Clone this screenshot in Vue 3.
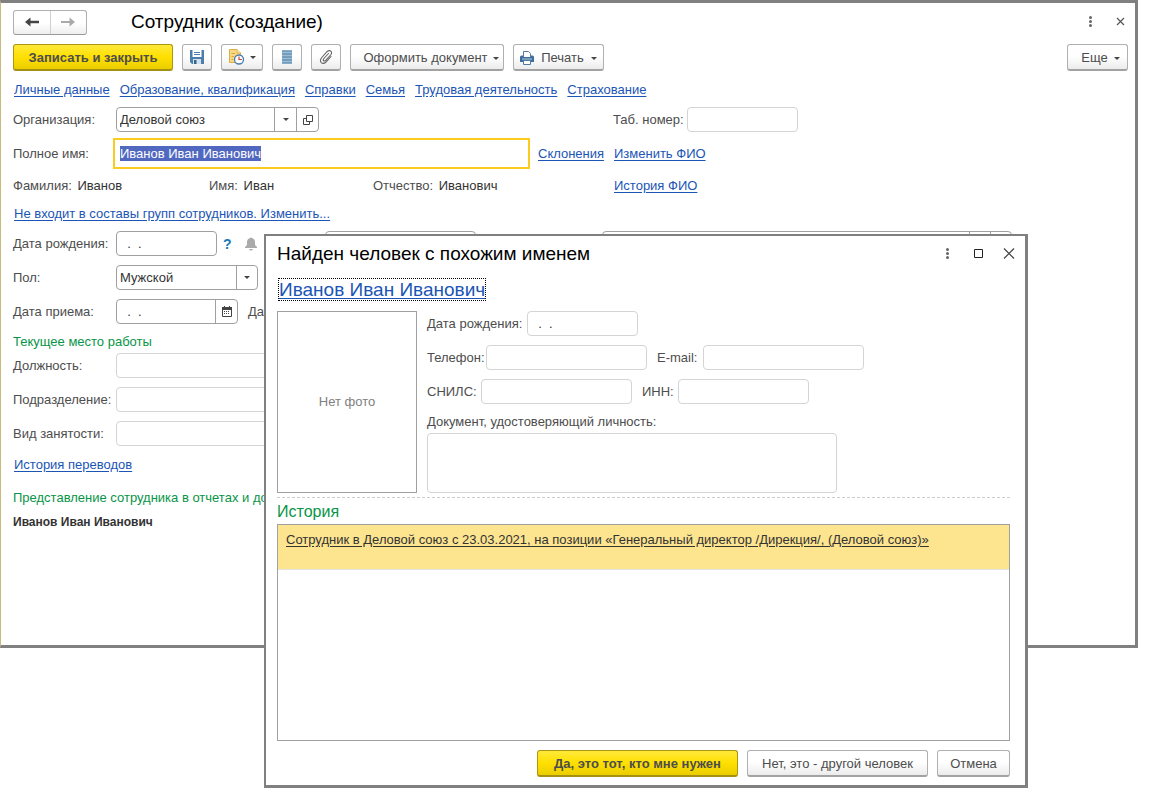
<script setup>
import { ref, onMounted } from 'vue'

const sections = ['Личные данные', 'Образование, квалификация', 'Справки', 'Семья', 'Трудовая деятельность', 'Страхование']
const organization = ref('Деловой союз')
const fullName = ref('Иванов Иван Иванович')
const gender = ref('Мужской')
const birthDate = ref('  .  .')
const hireDate = ref('  .  .')
const foundBirthDate = ref('  .  .')
const fullNameInput = ref(null)

onMounted(() => {
  fullNameInput.value.focus()
  fullNameInput.value.select()
})
</script>

<template>
  <div class="desktop">
    <main class="window">
      <header class="titlebar">
        <div class="history-nav">
          <button type="button" aria-label="Назад">
            <svg width="16" height="12" viewBox="0 0 16 12"><path d="M1 6 6.500 1.500V4.800H15V7.200H6.500V10.500Z" fill="#444" /></svg>
          </button>
          <button type="button" aria-label="Вперед">
            <svg width="16" height="12" viewBox="0 0 16 12"><path d="M15 6 9.500 1.500V5H1V7H9.500V10.500Z" fill="#aaa" /></svg>
          </button>
        </div>
        <h1>Сотрудник (создание)</h1>
        <div class="window-tools">
          <button type="button" class="plain" aria-label="Меню">
            <svg width="12" height="12" viewBox="0 0 12 12"><g fill="#666"><circle cx="5.500" cy="1.500" r="1.500" /><circle cx="5.500" cy="5.500" r="1.500" /><circle cx="5.500" cy="9.500" r="1.500" /></g></svg>
          </button>
          <button type="button" class="plain" aria-label="Закрыть">
            <svg width="12" height="12" viewBox="0 0 12 12"><path d="M2 2 9 9M9 2 2 9" stroke="#555" stroke-width="1.200" /></svg>
          </button>
        </div>
      </header>

      <div class="toolbar">
        <button type="button" class="btn primary save">Записать и закрыть</button>
        <button type="button" class="btn icon-btn" aria-label="Записать">
          <svg width="16" height="16" viewBox="0 0 16 16">
            <path d="M1 1H15V15H3L1 13Z" fill="#4d7eab" />
            <path d="M3.500 1H12.500V8H3.500Z" fill="#fff" />
            <path d="M5 3.500H11M5 5.500H11" stroke="#4d7eab" />
            <path d="M4 10H12V15H4Z" fill="#d5e1ec" /><path d="M5 11H7.500V15H5Z" fill="#33658f" />
          </svg>
        </button>
        <button type="button" class="btn icon-btn wide" aria-label="Отложенное проведение">
          <svg width="17" height="16" viewBox="0 0 17 16">
            <path d="M1.500 .5H9L12.500 4V13.500H1.500Z" fill="#f8d983" stroke="#dcae48" />
            <path d="M9 .5V4H12.500" fill="#fff3c9" stroke="#dcae48" />
            <path d="M3.500 4.500H7M3.500 7.500H6M3.500 10.500H5" stroke="#d8a63d" />
            <circle cx="11" cy="10.500" r="4.500" fill="#fff" stroke="#487bb1" stroke-width="1.300" />
            <path d="M11 7.500V10.500H14" fill="none" stroke="#d34a3a" stroke-width="1.200" />
          </svg>
          <span class="caret"></span>
        </button>
        <button type="button" class="btn icon-btn" aria-label="Список">
          <svg width="12" height="16" viewBox="0 0 12 16"><path d="M1 1.500H11V14.500H1Z" fill="#9dbdd5" /><path d="M1 2H11M1 5H11M1 8H11M1 11H11M1 14H11" stroke="#4b7da6" stroke-width="1.200" /></svg>
        </button>
        <button type="button" class="btn icon-btn" aria-label="Файлы">
          <svg width="16" height="16" viewBox="0 0 16 16"><path d="M10.500 4.500 5.500 10Q4.800 11.500 6 12Q7 12.300 8 11.200L13 5.500Q14.300 3.200 12.600 2Q11 1 9.200 2.500L3.400 9Q1.500 11.700 3.300 13.600Q5.300 15.400 8 13L13 7.500" fill="none" stroke="#666" stroke-width="1.100" stroke-linecap="round" /></svg>
        </button>
        <button type="button" class="btn doc">Оформить документ<span class="caret"></span></button>
        <button type="button" class="btn print">
          <svg width="14" height="14" viewBox="0 0 14 14">
            <path d="M3.500 6V.5H8.500L10.500 2.500V6" fill="#fff" stroke="#527b9f" />
            <path d="M0 6Q0 4.500 1.500 4.500H3V6H11V4.500H12.500Q14 4.500 14 6V11H0Z" fill="#3d6f9e" />
            <path d="M2 8H12" stroke="#b6cbdc" /><path d="M3.500 9.500H10.500V13.500H3.500Z" fill="#fff" stroke="#527b9f" />
          </svg>
          Печать<span class="caret"></span>
        </button>
        <button type="button" class="btn more">Еще<span class="caret"></span></button>
      </div>

      <nav class="sections">
        <a v-for="s in sections" :key="s" href="#">{{ s }}</a>
      </nav>

      <div class="row columns org-row">
        <label for="org">Организация:</label>
        <div class="field org">
          <input id="org" v-model="organization" type="text" />
          <button type="button" aria-label="Выбрать"><span class="caret"></span></button>
          <button type="button" aria-label="Открыть">
            <svg width="10" height="10" viewBox="0 0 10 10"><path d="M3.500 .5H9.500V6.500H3.500ZM3.500 3.500H.5V9.500H6.500V6.500" fill="none" stroke="#444" /></svg>
          </button>
        </div>
        <div class="number">
          <label for="number">Таб. номер:</label>
          <input id="number" type="text" class="box muted" />
        </div>
      </div>

      <div class="row columns name-row">
        <label for="full-name">Полное имя:</label>
        <input id="full-name" ref="fullNameInput" v-model="fullName" type="text" class="focused" />
        <a href="#">Склонения</a>
        <a href="#">Изменить ФИО</a>
      </div>

      <div class="row name-parts">
        <span>Фамилия: <b>Иванов</b></span>
        <span>Имя: <b>Иван</b></span>
        <span>Отчество: <b>Иванович</b></span>
        <a href="#">История ФИО</a>
      </div>

      <div class="groups"><a href="#">Не входит в составы групп сотрудников. Изменить...</a></div>

      <div class="stack">
        <div class="row">
          <label for="birth">Дата рождения:</label>
          <input id="birth" v-model="birthDate" type="text" class="box birth" />
          <button type="button" class="plain help" aria-label="Справка">?</button>
          <svg class="bell" width="12" height="14" viewBox="0 0 12 14"><path d="M5 1Q6 0 7 1Q10 2 10 5V8L12 10V11H0V10L2 8V5Q2 2 5 1ZM4 12H8Q7.500 13.500 6 13.500Q4.500 13.500 4 12Z" fill="#aaa" /></svg>
          <div class="field second-field"></div>
          <div class="field third-field"><i></i><i></i></div>
        </div>
        <div class="row">
          <label for="gender">Пол:</label>
          <div class="field gender">
            <select id="gender" v-model="gender"><option>Мужской</option></select>
            <span class="drop"><span class="caret"></span></span>
          </div>
        </div>
        <div class="row">
          <label for="hire">Дата приема:</label>
          <div class="field hire">
            <input id="hire" v-model="hireDate" type="text" />
            <button type="button" aria-label="Календарь">
              <svg width="10" height="11" viewBox="0 0 10 11"><path d="M.5 1.500H9.500V10.500H.5Z" fill="#fff" stroke="#444" /><path d="M0 1H10V4H0ZM2 0H3V1H2ZM7 0H8V1H7Z" fill="#444" /><path d="M2 5.500H8M2 7.500H8" stroke="#444" stroke-dasharray="1 1" /></svg>
            </button>
          </div>
          <span class="next-date">Дата</span>
        </div>
      </div>

      <h2 class="workplace">Текущее место работы</h2>
      <div class="stack">
        <div class="row"><label for="position">Должность:</label><input id="position" type="text" class="box muted job" /></div>
        <div class="row"><label for="department">Подразделение:</label><input id="department" type="text" class="box muted job" /></div>
        <div class="row"><label for="employment">Вид занятости:</label><input id="employment" type="text" class="box muted job" /></div>
      </div>
      <div class="transfers"><a href="#">История переводов</a></div>
      <h2 class="presentation">Представление сотрудника в отчетах и документах</h2>
      <p class="presentation-name">Иванов Иван Иванович</p>
    </main>

    <section class="dialog" role="dialog" aria-labelledby="dialog-title">
      <header class="dialog-title">
        <h2 id="dialog-title">Найден человек с похожим именем</h2>
        <div class="dialog-tools">
          <button type="button" class="plain" aria-label="Меню">
            <svg width="12" height="12" viewBox="0 0 12 12"><g fill="#666"><circle cx="6.500" cy="1.500" r="1.500" /><circle cx="6.500" cy="5.500" r="1.500" /><circle cx="6.500" cy="9.500" r="1.500" /></g></svg>
          </button>
          <button type="button" class="plain" aria-label="Развернуть">
            <svg width="12" height="12" viewBox="0 0 12 12"><path d="M2.500 1.500H10.500V9.500H2.500Z" fill="none" stroke="#222" /></svg>
          </button>
          <button type="button" class="plain" aria-label="Закрыть">
            <svg width="12" height="12" viewBox="0 0 12 12"><path d="M1 .5 11 10.500M11 .5 1 10.500" stroke="#444" stroke-width="1.200" /></svg>
          </button>
        </div>
      </header>
      <div class="person"><a href="#">Иванов Иван Иванович</a></div>

      <div class="card">
        <div class="photo">Нет фото</div>
        <div class="details">
          <div class="detail-row">
            <label for="f-birth" class="w100">Дата рождения:</label><input id="f-birth" v-model="foundBirthDate" type="text" class="box muted w111" />
          </div>
          <div class="detail-row">
            <label for="phone" class="w59">Телефон:</label><input id="phone" type="text" class="box muted w161" />
            <label for="email" class="second w46">E-mail:</label><input id="email" type="text" class="box muted w161" />
          </div>
          <div class="detail-row">
            <label for="snils" class="w54">СНИЛС:</label><input id="snils" type="text" class="box muted w151" />
            <label for="inn" class="second w36">ИНН:</label><input id="inn" type="text" class="box muted w131" />
          </div>
          <label for="document" class="document-label">Документ, удостоверяющий личность:</label>
          <textarea id="document" class="box muted"></textarea>
        </div>
      </div>

      <h3>История</h3>
      <div class="history-list">
        <div class="history-item">
          <a href="#">Сотрудник в Деловой союз с 23.03.2021, на позиции «Генеральный директор /Дирекция/, (Деловой союз)»</a>
        </div>
      </div>

      <footer>
        <button type="button" class="btn primary yes">Да, это тот, кто мне нужен</button>
        <button type="button" class="btn no">Нет, это - другой человек</button>
        <button type="button" class="btn cancel">Отмена</button>
      </footer>
    </section>
  </div>
</template>

<style>
body { background: #fff; }
</style>

<style scoped>
* { box-sizing: border-box; }
.desktop {
  position: relative;
  min-height: 100vh;
  font: 13px/16px "Liberation Sans", Arial, sans-serif;
  color: #4d4d4d;
}
button, input, select, textarea { font: inherit; margin: 0; color: inherit; }
h1, h2, h3, p { margin: 0; font-weight: normal; }
svg { display: block; flex: none; }
a { color: #1b55b5; text-underline-offset: 2px; }

.window {
  margin-right: 24px;
  min-height: 648px;
  padding: 7px 7px 0 12px;
  border: 3px solid #808080;
  border-left: 1px solid #c9ba7c;
}
.titlebar { display: flex; align-items: center; height: 24px; }
.history-nav { display: flex; width: 74px; height: 25px; border: 1px solid #b0b0b0; border-bottom-color: #999; border-radius: 3px; background: linear-gradient(#fff 50%, #efefef); }
.history-nav button { flex: 1; display: flex; align-items: center; justify-content: center; padding: 0; border: 0; background: none; }
.history-nav button + button { border-left: 1px solid #d0d0d0; }
h1 { margin-left: 44px; font-size: 19px; line-height: 24px; color: #000; }
.window-tools { display: flex; gap: 18px; margin-left: auto; padding-right: 1px; }
.plain { display: flex; align-items: center; padding: 0; border: 0; background: none; }

.toolbar { display: flex; margin-top: 10px; gap: 9px; }
.btn {
  display: flex;
  align-items: center;
  justify-content: center;
  height: 27px;
  padding: 2px 0 0;
  border: 1px solid #b0b0b0;
  border-bottom: 2px solid #a2a2a2;
  border-radius: 3px;
  background: linear-gradient(#fff 45%, #ececec);
  white-space: nowrap;
}
.primary { border-color: #ac9610; border-bottom-color: #a49012; background: linear-gradient(#ffe93a, #ffe000 50%, #ebcd00); font-weight: bold; }
.caret { flex: none; width: 0; border: 3px solid transparent; border-top-color: #444; border-bottom: 0; }
.save { width: 160px; }
.icon-btn { width: 30px; padding: 0; }
.icon-btn.wide { width: 42px; gap: 5px; }
.doc { width: 154px; gap: 5px; padding-left: 8px; }
.print { width: 91px; gap: 7px; }
.more { width: 61px; gap: 6px; padding-left: 6px; margin-left: auto; }

.sections { display: flex; align-items: center; gap: 10px; height: 36px; padding: 2px 0 0 1px; }
.row { display: flex; align-items: center; }
.row > label { width: 103px; flex: none; }
.columns { display: grid; grid-template-columns: 103px 422px 76px 1fr; }
.org-row { height: 25px; grid-template-columns: 103px 497px 1fr; }
.name-row { height: 31px; margin-top: 6px; }
.box, .field { height: 25px; border: 1px solid #a0a0a0; border-radius: 4px; background: #fff; color: #333; }
.box { padding: 0 3px; outline: 0; }
.box.muted { border-color: #d4d4d4; }
.field { display: flex; flex: none; overflow: hidden; }
.field input, .field select { flex: 1; min-width: 0; padding: 0 3px; border: 0; outline: 0; background: none; }
.field button { display: flex; align-items: center; justify-content: center; width: 22px; padding: 0; border: 0; border-left: 1px solid #a0a0a0; background: none; }
.org { width: 203px; }
.number { display: flex; align-items: center; }
.number label { width: 74px; }
.number input { width: 111px; }
.focused { width: 417px; height: 31px; margin-left: -3px; padding: 0 5px; border: 2px solid #fbcb20; outline: 0; color: #333; }
.focused::selection { background: #5168c0; color: #fff; }
.name-parts { display: grid; grid-template-columns: 196px 164px 241px 1fr; height: 32px; padding-top: 2px; }
.name-parts b { margin-left: 2px; font-weight: normal; color: #333; }
.groups { display: flex; align-items: center; height: 25px; margin-bottom: 5px; padding-left: 1px; }

.stack { display: flex; flex-direction: column; gap: 9px; }
.birth { width: 101px; }
.help { width: 8px; margin-left: 6px; font-size: 14px; font-weight: bold; color: #1878b8; }
.bell { margin-left: 14px; }
.second-field { width: 151px; margin-left: 68px; }
.third-field { width: 410px; margin-left: 126px; justify-content: flex-end; }
.third-field i { width: 21px; border-left: 1px solid #a0a0a0; }
.gender { position: relative; width: 142px; }
.gender select { appearance: none; }
.drop { position: absolute; top: 0; right: 0; display: flex; align-items: center; justify-content: center; width: 21px; height: 100%; border-left: 1px solid #a0a0a0; pointer-events: none; }
.hire { width: 122px; }
.next-date { margin-left: 10px; }
.workplace, .presentation { font-size: 13px; line-height: 16px; color: #079547; }
.workplace { padding: 10px 0 3px; }
.job { width: 360px; }
.transfers { padding: 11px 0 10px 1px; }
.presentation { padding: 7px 0; }
.presentation-name { padding: 1px 0; font-size: 12px; font-weight: bold; color: #333; }

.dialog {
  position: absolute;
  top: 234px;
  left: 264px;
  right: 134px;
  padding: 0 15px 8px 11px;
  border: 2px solid #808080;
  border-right-width: 3px;
  border-bottom-width: 3px;
  background: #fff;
}
.dialog-title { display: flex; align-items: center; height: 36px; }
.dialog-title h2 { font-size: 19px; line-height: 24px; color: #000; }
.dialog-tools { display: flex; gap: 19px; margin-left: auto; margin-right: -5px; }
.person { display: flex; height: 39px; padding: 6px 0 0 1px; }
.person a { height: 23px; outline: 1px dotted #000; outline-offset: -1px; padding: 0 1px; font-size: 19px; line-height: 23px; }
.card { display: flex; gap: 10px; padding-bottom: 4px; border-bottom: 1px dashed #ccc; }
.photo { display: flex; align-items: center; justify-content: center; width: 140px; height: 182px; border: 1px solid #a0a0a0; color: #808080; }
.details { display: flex; flex-direction: column; }
.detail-row { display: flex; align-items: center; height: 25px; margin-bottom: 9px; }
.detail-row .second { margin-left: 10px; }
.w36 { width: 36px; }
.w46 { width: 46px; }
.w54 { width: 54px; }
.w59 { width: 59px; }
.w100 { width: 100px; }
.w111 { width: 111px; }
.w131 { width: 131px; }
.w151 { width: 151px; }
.w161 { width: 161px; }
.document-label { height: 20px; padding-top: 1px; }
textarea.box { width: 410px; height: 60px; resize: none; }
h3 { padding-top: 2px; font-size: 16px; line-height: 24px; color: #079547; }
.history-list { height: 217px; border: 1px solid #a0a0a0; }
.history-item { height: 45px; padding: 7px 8px; border-bottom: 1px solid #e2e2e2; background: #fde48f; background-clip: padding-box; }
.history-item a { color: #333; }
footer { display: flex; justify-content: flex-end; gap: 9px; padding-top: 9px; }
.yes { width: 201px; }
.no { width: 181px; }
.cancel { width: 73px; }
</style>
